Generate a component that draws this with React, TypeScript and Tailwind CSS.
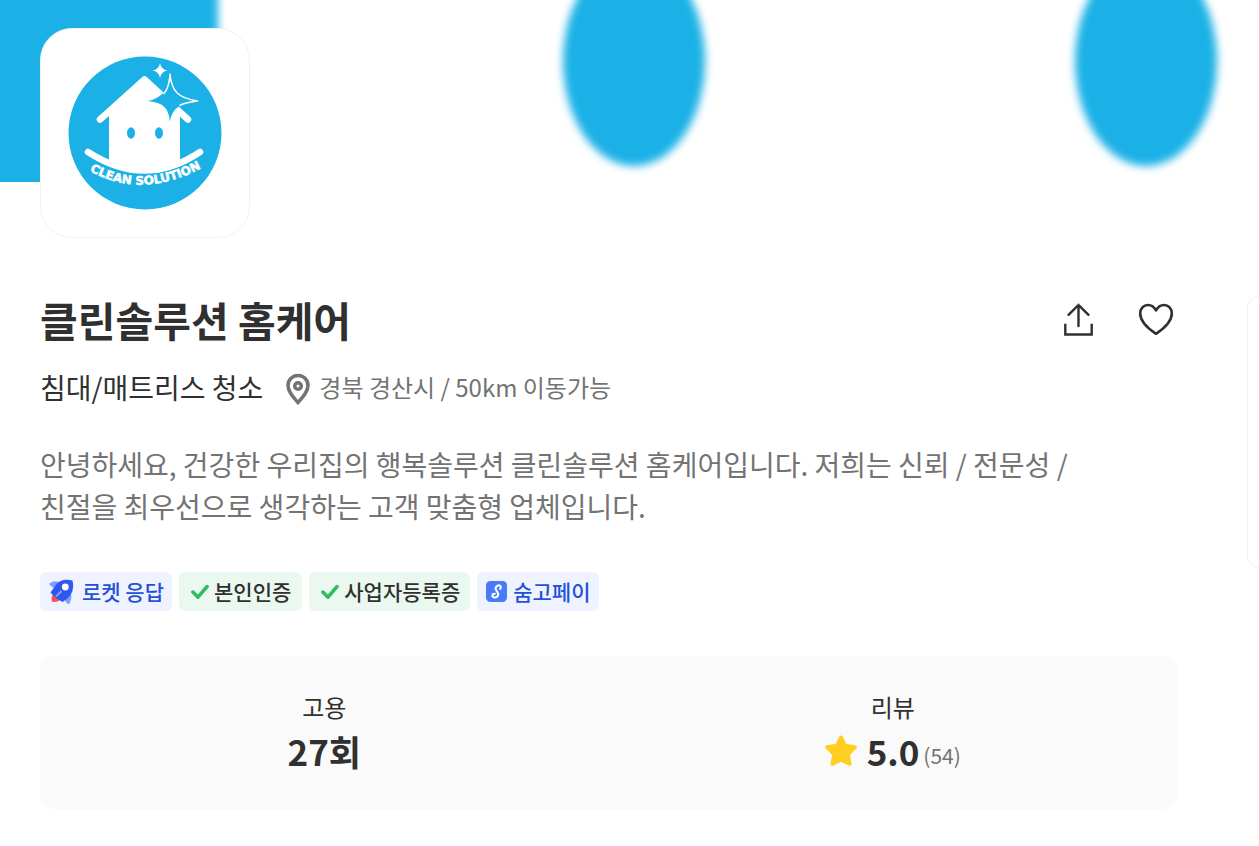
import React from "react";

const stack = "font-['Noto_Sans_CJK_KR',sans-serif]";

function Banner() {
  return (
    <svg
      className="block h-[182px] w-full"
      viewBox="0 0 1259 182"
      preserveAspectRatio="xMinYMin slice"
      aria-hidden="true"
    >
      <defs>
        <filter id="soft" x="-20%" y="-20%" width="140%" height="140%" colorInterpolationFilters="sRGB">
          <feGaussianBlur stdDeviation="4.5" />
        </filter>
      </defs>
      <rect x="-40" y="-40" width="258" height="270" fill="#1bb1e6" filter="url(#soft)" />
      <ellipse cx="634" cy="61" rx="71" ry="105" fill="#1bb1e6" filter="url(#soft)" />
      <ellipse cx="1146" cy="61" rx="71" ry="105" fill="#1bb1e6" filter="url(#soft)" />
    </svg>
  );
}

function Logo() {
  return (
    <svg className="h-full w-full" viewBox="41 29 208 208" role="img" aria-label="CLEAN SOLUTION">
      <circle cx="145" cy="133" r="76.5" fill="#1bb1e6" />
      <path d="M109 113 L144.5 80 L180 113 V164 Q145 180 109 164 Z" fill="#fff" />
      <path
        d="M100 119.5 L144.5 79.5 L188 119.5"
        fill="none"
        stroke="#fff"
        strokeWidth="6.5"
        strokeLinecap="round"
        strokeLinejoin="round"
      />
      <path d="M88 152 Q145 189 200 152" fill="none" stroke="#fff" strokeWidth="6.5" strokeLinecap="round" />
      <ellipse cx="131" cy="133" rx="4" ry="5.7" fill="#1bb1e6" />
      <ellipse cx="159" cy="133" rx="4" ry="5.7" fill="#1bb1e6" />
      <path
        d="M170 74 C171.500 91 178 98 197.500 101 C182 103 172 107 170 122 C168.500 107 163 103 148 101 C161 98 168.500 91 170 74 Z"
        fill="#1bb1e6"
      />
      <path
        d="M163.500 94 C167.500 90 169.500 84 170 74 C171.500 91 178 98 197.500 101 C189 102.200 183 103.500 179.500 105.500"
        fill="none"
        stroke="#fff"
        strokeWidth="1.500"
        strokeLinejoin="round"
      />
      <path d="M160 63 Q161 69.500 167.500 70.500 Q161 71.500 160 78 Q159 71.500 152.500 70.500 Q159 69.500 160 63 Z" fill="#fff" />
      <path id="smile" d="M89.500 171 Q146 202 210 163" fill="none" />
      <text fontFamily="DejaVu Sans" fontWeight="700" fontSize="12" fill="#fff" stroke="#fff" strokeWidth="0.500">
        <textPath href="#smile">CLEAN SOLUTION</textPath>
      </text>
    </svg>
  );
}

function ShareIcon() {
  return (
    <svg className="size-9" viewBox="0 0 36 36" fill="none" stroke="#303030" strokeWidth="2.400" strokeLinecap="round" aria-hidden="true">
      <path d="M18.500 4 V25 M8.500 13.800 L18.500 4 L28.500 13.800" />
      <path d="M5.300 24 V33.500 H31.700 V24" strokeLinecap="square" />
    </svg>
  );
}

function HeartIcon() {
  return (
    <svg className="size-9" viewBox="0 0 36 36" fill="none" stroke="#303030" strokeWidth="2.600" strokeLinejoin="round" aria-hidden="true">
      <path d="M18 9.500 C16 5.500 13 4 10 4 C5.500 4 2.200 7.500 2.200 12.500 C2.200 20.500 8.500 26.500 18 32.800 C27.500 26.500 33.800 20.500 33.800 12.500 C33.800 7.500 30.500 4 26 4 C23 4 20 5.500 18 9.500 Z" />
    </svg>
  );
}

function PinIcon() {
  return (
    <svg className="mt-[3px] h-8 w-6" viewBox="0 0 24 32" fill="none" stroke="#737373" aria-hidden="true">
      <path d="M12 2.500 C6.600 2.500 2 6.800 2 12.500 C2 19 7.500 24.500 12 29.500 C16.500 24.500 22 19 22 12.500 C22 6.800 17.400 2.500 12 2.500 Z" strokeWidth="3.500" />
      <circle cx="12" cy="13" r="3.300" strokeWidth="3.500" />
    </svg>
  );
}

function RocketIcon() {
  return (
    <svg className="size-[26px]" viewBox="0 0 26 26" aria-hidden="true">
      <path d="M11 3 Q4.500 1 1 5 Q3.500 8.500 8 9.500 Z" fill="#7d9ff7" />
      <path d="M23 14 Q24.500 20.500 20.500 25.500 Q17 23 16 19 Z" fill="#7d9ff7" />
      <path d="M5 15.500 L12 21 Q9 23.500 4 22.800 Q2.800 18.500 5 15.500 Z" fill="#fb4b5d" />
      <path d="M24.500 1.500 Q14 -1 9 4.500 Q5.500 9 2.500 13.500 Q7 19 14.500 23 Q19.500 20 22.500 16 Q26.500 10 24.500 1.500 Z" fill="#2f56ee" />
      <path d="M8.500 17 L13 12.500" stroke="#7d9ff7" strokeWidth="2" strokeLinecap="round" />
      <circle cx="17.300" cy="8" r="3.400" fill="#fff" />
    </svg>
  );
}

function CheckIcon() {
  return (
    <svg className="h-4 w-[18px]" viewBox="0 0 18 16" fill="none" stroke="#2dbd64" strokeWidth="3.500" strokeLinecap="round" strokeLinejoin="round" aria-hidden="true">
      <path d="M1.900 8 L7 13.200 L16.100 2.500" />
    </svg>
  );
}

function PayIcon() {
  return (
    <svg className="size-[21px]" viewBox="0 0 21 21" fill="none" aria-hidden="true">
      <rect width="21" height="21" rx="4.500" fill="#4a7bf7" />
      <path
        d="M14.200 7.800 C15.800 5.300 13.500 3.600 11.500 4.600 C8.500 6.500 9.500 8.500 11 10.300 C13.500 13.500 11.500 16.800 8.500 16.500 C5.500 16 5.800 12.600 8.800 12.800"
        stroke="#fff"
        strokeWidth="2.100"
        strokeLinecap="round"
      />
    </svg>
  );
}

function StarIcon() {
  return (
    <svg className="size-8" viewBox="0 0 32 32" aria-hidden="true">
      <path
        d="M16 2.500 L20 10.800 L29.800 12.200 L22.800 19 L24.500 28.800 L16 24.500 L7.500 28.800 L9.200 19 L2.200 12.200 L12 10.800 Z"
        fill="#ffce21"
        stroke="#ffce21"
        strokeWidth="4"
        strokeLinejoin="round"
      />
    </svg>
  );
}

const badge = "flex h-[39px] items-center rounded-md text-[21px] leading-none font-medium";

export default function App() {
  return (
    <div className={`min-h-screen overflow-hidden bg-white text-[#303030] ${stack}`}>
      <Banner />
      <div className="flex items-start gap-[70px] pl-10">
        <main className="min-w-0 flex-1">
          <div className="relative -mt-[154px] size-[210px] overflow-hidden rounded-[32px] border border-[#f2f2f2] bg-white">
            <Logo />
          </div>

          <div className="mt-[50px] flex items-center justify-between">
            <h1 className="text-[41px] leading-[62px] font-bold">클린솔루션 홈케어</h1>
            <div className="flex gap-[42px] pr-[3px]">
              <button type="button" aria-label="공유하기">
                <ShareIcon />
              </button>
              <button type="button" aria-label="찜하기">
                <HeartIcon />
              </button>
            </div>
          </div>

          <div className="mt-4 flex items-center gap-[23px]">
            <p className="text-[28px] leading-[42px]">침대/매트리스 청소</p>
            <p className="flex items-center gap-[9px] text-2xl leading-10 text-[#737373]">
              <PinIcon />
              경북 경산시 / 50km 이동가능
            </p>
          </div>

          <p className="mt-[35px] pr-10 text-[28px] leading-[42px] break-keep text-[#737373]">
            안녕하세요, 건강한 우리집의 행복솔루션 클린솔루션 홈케어입니다. 저희는 신뢰 / 전문성 / 친절을 최우선으로 생각하는 고객 맞춤형 업체입니다.
          </p>

          <ul className="mt-[45px] flex flex-wrap gap-[7px]">
            <li className={`${badge} gap-2 bg-[#eff3ff] px-2 text-[#2451d6]`}>
              <RocketIcon />
              로켓 응답
            </li>
            <li className={`${badge} gap-[5px] bg-[#ebf8f0] pr-[11px] pl-3`}>
              <CheckIcon />
              본인인증
            </li>
            <li className={`${badge} gap-[5px] bg-[#ebf8f0] pr-[10px] pl-3`}>
              <CheckIcon />
              사업자등록증
            </li>
            <li className={`${badge} gap-[6px] bg-[#eff3ff] pr-2 pl-[9px] text-[#2451d6]`}>
              <PayIcon />
              숨고페이
            </li>
          </ul>

          <dl className="mt-[45px] grid grid-cols-2 rounded-[14px] bg-[#fafafa] py-[33px] text-center">
            <div>
              <dt className="text-2xl leading-9">고용</dt>
              <dd className="text-[35px] leading-[51px] font-bold">27회</dd>
            </div>
            <div>
              <dt className="text-2xl leading-9">리뷰</dt>
              <dd className="flex items-center justify-center text-[35px] leading-[51px] font-bold">
                <StarIcon />
                <span className="ml-[10px]">5.0</span>
                <span className="mt-2 ml-1 text-[21px] leading-8 font-normal text-[#737373]">(54)</span>
              </dd>
            </div>
          </dl>
        </main>
        <aside className="mt-[114px] h-[272px] w-3 shrink-0 rounded-l-[20px] border border-r-0 border-[#f2f2f2]" />
      </div>
    </div>
  );
}
